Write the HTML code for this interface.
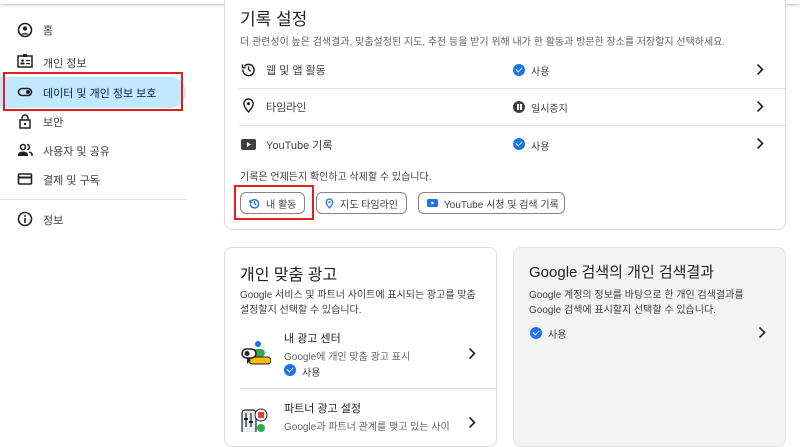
<!DOCTYPE html>
<html><head><meta charset="utf-8"><style>
*{margin:0;padding:0;box-sizing:border-box}
body{width:800px;height:432px;overflow:hidden;background:#fff;font-family:"Liberation Sans","Noto Sans CJK KR",sans-serif;color:#202124;position:relative}
.a{position:absolute}
.topbar{left:0;top:0;width:800px;height:4px;box-shadow:0 1px 3px rgba(0,0,0,.25);background:#fff}
.nav{left:0;font-size:11px;color:#3c4043}
.nav .ic{position:absolute;left:17px;width:16px;height:16px}
.nav span{position:absolute;left:43px}
.card{border:1px solid #dadce0;border-radius:8px;background:#fff}
.t10{font-size:10px;color:#5f6368}
.hr{height:1px;background:#e0e0e0}
.btn{border:1px solid #80868b;border-radius:6px;height:22px;font-size:10px;color:#3c4043;display:flex;align-items:center;padding-left:8px;gap:6px}
.chk{position:absolute;width:12px;height:12px;border-radius:50%;background:#1a73e8;display:block}
.chk:after{content:"";position:absolute;left:3px;top:3px;width:5px;height:3px;border-left:1.5px solid #fff;border-bottom:1.5px solid #fff;transform:rotate(-45deg)}
</style></head><body>
<div class="a topbar"></div>

<!-- sidebar -->
<div class="a nav" style="top:22px;width:200px;height:16px">
<svg class="ic" viewBox="0 0 16 16"><circle cx="8" cy="8" r="6.5" fill="none" stroke="#202124" stroke-width="1.6"/><circle cx="8" cy="6.5" r="2.2" fill="#202124"/><path d="M4 12.5c1.5-2 6.5-2 8 0" fill="#202124"/></svg><span>홈</span></div>
<div class="a nav" style="top:53px;width:200px;height:16px">
<svg class="ic" viewBox="0 0 16 16"><rect x="1" y="3" width="14" height="11" fill="none" stroke="#202124" stroke-width="1.5"/><rect x="6" y="1" width="4" height="3" fill="#202124"/><circle cx="5.5" cy="7.5" r="1.3" fill="#202124"/><rect x="3.5" y="9.5" width="4" height="2" fill="#202124"/><rect x="9" y="7" width="4" height="1.2" fill="#202124"/><rect x="9" y="10" width="4" height="1.2" fill="#202124"/></svg><span style="top:2px">개인 정보</span></div>
<div class="a" style="left:0;top:77px;width:186px;height:31px;background:#c2e7ff;border-radius:0 16px 16px 0"></div>
<div class="a" style="left:3px;top:72px;width:180px;height:39px;border:2px solid #e0201c"></div>
<div class="a nav" style="top:84px;width:200px;height:16px;color:#041e49">
<svg class="ic" viewBox="0 0 16 16"><rect x="1.5" y="4.5" width="13" height="7" rx="3.5" fill="none" stroke="#202124" stroke-width="1.6"/><circle cx="11" cy="8" r="2" fill="#202124"/></svg><span style="top:1px">데이터 및 개인 정보 보호</span></div>
<div class="a nav" style="top:113px;width:200px;height:16px">
<svg class="ic" viewBox="0 0 16 16"><rect x="3" y="7" width="10" height="8" fill="none" stroke="#202124" stroke-width="1.5"/><path d="M5 7V5a3 3 0 0 1 6 0v2" fill="none" stroke="#202124" stroke-width="1.5"/><circle cx="8" cy="11" r="1.2" fill="#202124"/></svg><span style="top:1px">보안</span></div>
<div class="a nav" style="top:142px;width:200px;height:16px">
<svg class="ic" viewBox="0 0 16 16"><circle cx="6" cy="5" r="2.5" fill="none" stroke="#202124" stroke-width="1.6"/><path d="M1 14v-1.5c0-2 3-3 5-3s5 1 5 3V14z" fill="#202124"/><path d="M10 2.5a2.5 2.5 0 0 1 0 5M12 10c1.5.5 3 1.2 3 2.5V14" fill="none" stroke="#202124" stroke-width="1.6"/></svg><span style="top:1px">사용자 및 공유</span></div>
<div class="a nav" style="top:171px;width:200px;height:16px">
<svg class="ic" viewBox="0 0 16 16"><rect x="1.5" y="3" width="13" height="10" rx="1" fill="none" stroke="#202124" stroke-width="1.6"/><rect x="1.5" y="5.5" width="13" height="2" fill="#202124"/></svg><span style="top:1px">결제 및 구독</span></div>
<div class="a" style="left:0;top:199px;width:187px;height:1px;background:#e0e0e0"></div>
<div class="a nav" style="top:211px;width:200px;height:16px">
<svg class="ic" viewBox="0 0 16 16"><circle cx="8" cy="8" r="6.5" fill="none" stroke="#202124" stroke-width="1.6"/><rect x="7.2" y="7" width="1.6" height="5" fill="#202124"/><circle cx="8" cy="5" r="1" fill="#202124"/></svg><span style="top:1px">정보</span></div>

<!-- main card -->
<div class="a card" style="left:224px;top:-10px;width:562px;height:240px"></div>
<div class="a" style="left:240px;top:5px;font-size:17px">기록 설정</div>
<div class="a t10" style="left:240px;top:33px">더 관련성이 높은 검색결과, 맞춤설정된 지도, 추천 등을 받기 위해 내가 한 활동과 방문한 장소를 저장할지 선택하세요.</div>

<svg class="a" style="left:241px;top:62px" width="15" height="15" viewBox="0 0 16 16"><path d="M3.5 4.5A6 6 0 1 1 2 8" fill="none" stroke="#202124" stroke-width="1.6"/><path d="M1.5 2.5v3.5H5" fill="none" stroke="#202124" stroke-width="1.5"/><path d="M8 4.5V8l2.5 2" fill="none" stroke="#202124" stroke-width="1.5"/></svg>
<div class="a" style="left:266px;top:62px;color:#3c4043;font-size:11px">웹 및 앱 활동</div>
<span class="chk" style="left:513px;top:64px"></span><div class="a" style="left:531px;top:63px;font-size:10px;color:#3c4043">사용</div>
<svg class="a" style="left:756px;top:63px" width="8" height="13" viewBox="0 0 8 13"><path d="M1.5 1.5l5 5-5 5" fill="none" stroke="#202124" stroke-width="1.6"/></svg>
<div class="a hr" style="left:239px;top:88px;width:546px"></div>

<svg class="a" style="left:242px;top:98px" width="13" height="15" viewBox="0 0 14 16"><path d="M7 1a5 5 0 0 1 5 5c0 3.5-5 9-5 9S2 9.5 2 6a5 5 0 0 1 5-5z" fill="none" stroke="#202124" stroke-width="1.5"/><circle cx="7" cy="6" r="1.7" fill="#202124"/></svg>
<div class="a" style="left:266px;top:99px;font-size:11px;color:#3c4043">타임라인</div>
<span class="a" style="left:513px;top:101px;width:12px;height:12px;border-radius:50%;background:#3c4043"></span>
<span class="a" style="left:517px;top:104px;width:1.5px;height:6px;background:#fff"></span><span class="a" style="left:520px;top:104px;width:1.5px;height:6px;background:#fff"></span>
<div class="a" style="left:531px;top:100px;font-size:10px;color:#3c4043">일시중지</div>
<svg class="a" style="left:756px;top:100px" width="8" height="13" viewBox="0 0 8 13"><path d="M1.5 1.5l5 5-5 5" fill="none" stroke="#202124" stroke-width="1.6"/></svg>
<div class="a hr" style="left:239px;top:125px;width:546px"></div>

<svg class="a" style="left:241px;top:139px" width="15" height="11" viewBox="0 0 15 11"><rect width="15" height="11" rx="2" fill="#3c4043"/><path d="M6 3v5l4-2.5z" fill="#fff"/></svg>
<div class="a" style="left:266px;top:137px;font-size:11px;color:#3c4043">YouTube 기록</div>
<span class="chk" style="left:513px;top:138px"></span><div class="a" style="left:531px;top:138px;font-size:10px;color:#3c4043">사용</div>
<svg class="a" style="left:756px;top:137px" width="8" height="13" viewBox="0 0 8 13"><path d="M1.5 1.5l5 5-5 5" fill="none" stroke="#202124" stroke-width="1.6"/></svg>

<div class="a t10" style="left:240px;top:168px;color:#3c4043">기록은 언제든지 확인하고 삭제할 수 있습니다.</div>
<div class="a btn" style="left:240px;top:192px;width:65px"><svg width="11" height="11" viewBox="0 0 16 16"><path d="M3.5 4.5A6 6 0 1 1 2 8" fill="none" stroke="#1a73e8" stroke-width="2"/><path d="M1.5 2.5v3.5H5" fill="none" stroke="#1a73e8" stroke-width="2"/><path d="M8 4.5V8l2.5 2" fill="none" stroke="#1a73e8" stroke-width="2"/></svg>내 활동</div>
<div class="a" style="left:234px;top:185px;width:80px;height:35px;border:2px solid #e0201c"></div>
<div class="a btn" style="left:316px;top:192px;width:91px"><svg width="9" height="11" viewBox="0 0 14 16"><path d="M7 1a5 5 0 0 1 5 5c0 3.5-5 9-5 9S2 9.5 2 6a5 5 0 0 1 5-5z" fill="none" stroke="#1a73e8" stroke-width="2"/><circle cx="7" cy="6" r="1.7" fill="#1a73e8"/></svg>지도 타임라인</div>
<div class="a btn" style="left:418px;top:192px;width:147px"><svg width="11" height="8" viewBox="0 0 15 11"><rect width="15" height="11" rx="2" fill="#1a73e8"/><path d="M6 3v5l4-2.5z" fill="#fff"/></svg>YouTube 시청 및 검색 기록</div>

<!-- ads card -->
<div class="a card" style="left:224px;top:247px;width:273px;height:200px"></div>
<div class="a" style="left:240px;top:261px;font-size:16px">개인 맞춤 광고</div>
<div class="a t10" style="left:240px;top:288px;line-height:15px;color:#3c4043">Google 서비스 및 파트너 사이트에 표시되는 광고를 맞춤<br>설정할지 선택할 수 있습니다.</div>
<svg class="a" style="left:241px;top:340px" width="30" height="28" viewBox="0 0 30 28"><circle cx="17" cy="4" r="3" fill="#1a73e8"/><rect x="8" y="9" width="16" height="8" rx="4" fill="#34a853"/><rect x="8" y="17" width="22" height="7" rx="3.5" fill="#fbbc04" stroke="#202124" stroke-width="1"/><rect x="1" y="9" width="14" height="9" rx="4.5" fill="#fff" stroke="#202124" stroke-width="1.5"/><circle cx="6" cy="13.5" r="2.5" fill="#202124"/><path d="M6 18v6l4-4z" fill="#202124"/></svg>
<div class="a" style="left:284px;top:330px;font-size:11px">내 광고 센터</div>
<div class="a t10" style="left:284px;top:348px">Google에 개인 맞춤 광고 표시</div>
<span class="chk" style="left:284px;top:364px"></span><div class="a" style="left:302px;top:364px;font-size:10px;color:#3c4043">사용</div>
<svg class="a" style="left:468px;top:347px" width="8" height="13" viewBox="0 0 8 13"><path d="M1.5 1.5l5 5-5 5" fill="none" stroke="#202124" stroke-width="1.6"/></svg>
<div class="a hr" style="left:240px;top:388px;width:257px"></div>
<svg class="a" style="left:241px;top:406px" width="30" height="26" viewBox="0 0 30 26"><rect x="1" y="4" width="14" height="24" rx="3" fill="#e8eaed" stroke="#202124" stroke-width="1.2"/><path d="M5 7v14M10 7v14" stroke="#202124" stroke-width="1.2"/><rect x="3" y="12" width="4" height="2" fill="#202124"/><rect x="8" y="15" width="4" height="2" fill="#202124"/><circle cx="20" cy="9" r="6" fill="#fff" stroke="#202124"/><rect x="17" y="6" width="6" height="6" fill="#ea4335"/><circle cx="20" cy="22" r="4" fill="#34a853"/></svg>
<div class="a" style="left:284px;top:400px;font-size:11px">파트너 광고 설정</div>
<div class="a t10" style="left:284px;top:418px">Google과 파트너 관계를 맺고 있는 사이</div>
<svg class="a" style="left:468px;top:416px" width="8" height="13" viewBox="0 0 8 13"><path d="M1.5 1.5l5 5-5 5" fill="none" stroke="#202124" stroke-width="1.6"/></svg>

<!-- search card -->
<div class="a" style="left:513px;top:247px;width:273px;height:200px;background:#f3f3f3;border:1px solid #e3e3e3;border-radius:8px"></div>
<div class="a" style="left:529px;top:261px;font-size:15px">Google 검색의 개인 검색결과</div>
<div class="a t10" style="left:529px;top:288px;line-height:15px;color:#3c4043">Google 계정의 정보를 바탕으로 한 개인 검색결과를<br>Google 검색에 표시할지 선택할 수 있습니다.</div>
<span class="chk" style="left:530px;top:327px"></span><div class="a" style="left:548px;top:326px;font-size:10px;color:#3c4043">사용</div>
<svg class="a" style="left:758px;top:326px" width="8" height="13" viewBox="0 0 8 13"><path d="M1.5 1.5l5 5-5 5" fill="none" stroke="#202124" stroke-width="1.6"/></svg>
</body></html>
